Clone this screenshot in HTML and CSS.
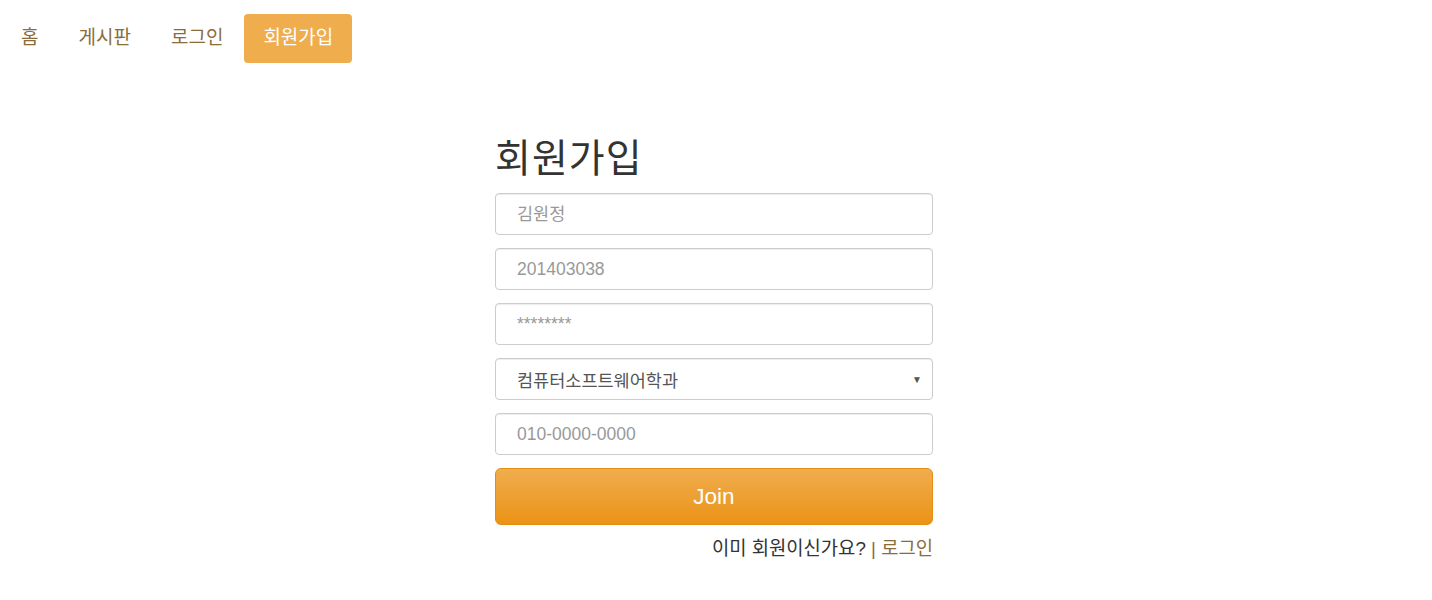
FILE: index.html
```html
<!DOCTYPE html>
<html lang="ko">
<head>
<meta charset="utf-8">
<title>회원가입</title>
<link rel="stylesheet" href="styles.css">
</head>
<body>
<nav class="nav">
  <ul class="pills">
    <li><a href="#">홈</a></li>
    <li><a href="#">게시판</a></li>
    <li><a href="#">로그인</a></li>
    <li class="active"><a href="#">회원가입</a></li>
  </ul>
</nav>
<main class="wrap">
  <form class="form">
    <h2 class="title">회원가입</h2>
    <input class="field" type="text" placeholder="김원정">
    <input class="field" type="text" placeholder="201403038">
    <input class="field" type="password" placeholder="********">
    <div class="select">
      <span class="select-text">컴퓨터소프트웨어학과</span>
      <span class="caret">▼</span>
    </div>
    <input class="field" type="text" placeholder="010-0000-0000">
    <button class="join" type="button">Join</button>
    <p class="foot">이미 회원이신가요? <a href="#">| 로그인</a></p>
  </form>
</main>
</body>
</html>
```
FILE: styles.css
```css
* { box-sizing: border-box; }
body {
  margin: 0;
  font-family: "Liberation Sans", "Noto Sans CJK KR", sans-serif;
  color: #333;
  background: #fff;
}
.nav { padding: 14px 0 0 2px; }
.pills {
  list-style: none;
  margin: 0;
  padding: 0;
  display: flex;
  gap: 2px;
}
.pills a {
  display: block;
  height: 49px;
  line-height: 48px;
  padding: 0 19px;
  font-size: 19px;
  color: #8a6d3b;
  text-decoration: none;
  border-radius: 4px;
}
.pills .active a {
  background: #f0ad4e;
  color: #fff;
}
.wrap {
  display: flex;
  justify-content: center;
  padding: 0 4px 0 0;
}
.form {
  width: 438px;
  display: flex;
  flex-direction: column;
  margin-top: 73px;
}
.title {
  margin: 0 0 12px 0;
  font-size: 39px;
  letter-spacing: 1px;
  font-weight: 400;
  line-height: 45px;
  color: #333;
  padding-left: 0;
}
.field, .select {
  height: 42px;
  width: 100%;
  border: 1px solid #ccc;
  border-radius: 4px;
  box-shadow: inset 0 1px 1px rgba(0,0,0,.075);
  padding: 0 21px;
  font-size: 17.5px;
  font-family: "Liberation Sans", "Noto Sans CJK KR", sans-serif;
  color: #555;
  margin-bottom: 13px;
  background: #fff;
}
.field::placeholder { color: #999; }
.select {
  display: flex;
  align-items: center;
  justify-content: space-between;
  padding-right: 10px;
}
.caret {
  font-size: 10px;
  color: #555;
}
.join {
  height: 57px;
  width: 100%;
  border: 1px solid #e38d13;
  border-radius: 6px;
  background: linear-gradient(to bottom, #f0ad4e 0%, #eb9316 100%);
  color: #fff;
  font-size: 22.5px;
  font-family: "Liberation Sans", "Noto Sans CJK KR", sans-serif;
  padding: 0;
}
.foot {
  margin: 11px 0 0 0;
  text-align: right;
  font-size: 18.8px;
  line-height: 26px;
  color: #333;
}
.foot a {
  color: #8a6d3b;
  text-decoration: none;
}
```
